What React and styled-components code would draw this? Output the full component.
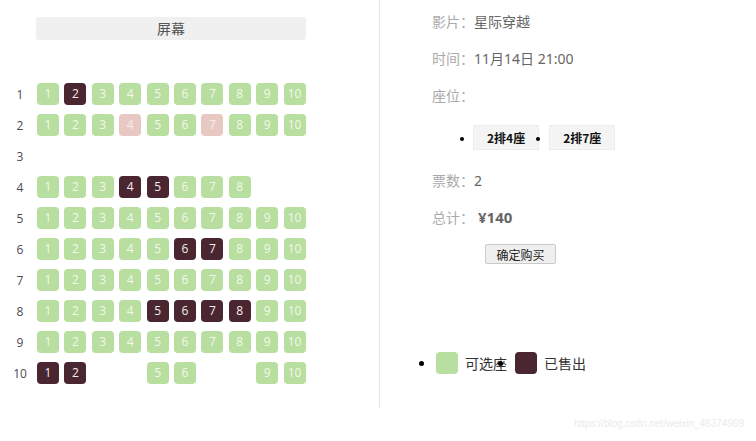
import styled, { createGlobalStyle } from "styled-components";

const GlobalStyle = createGlobalStyle`
  html, body {
    margin: 0;
    padding: 0;
    background: #fff;
  }
  body {
    font-family: "Noto Sans", "Noto Sans CJK SC", sans-serif;
  }
`;

const Page = styled.div`
  position: relative;
  display: flex;
  width: 756px;
  height: 441px;
  overflow: hidden;
`;

const Hall = styled.div`
  width: 379px;
  height: 408px;
  border-right: 1px solid #e6e6e6;
  display: flex;
  flex-direction: column;
`;

const Screen = styled.div`
  margin: 17px 0 0 36px;
  width: 270px;
  height: 23px;
  border-radius: 3px;
  background: #f0f0f0;
  color: #555;
  font-family: "Noto Sans CJK SC", sans-serif;
  font-size: 14px;
  line-height: 23px;
  text-align: center;
`;

const Rows = styled.div`
  margin-top: 43px;
  display: flex;
  flex-direction: column;
  gap: 9px;
`;

const Row = styled.div`
  display: flex;
  align-items: center;
  height: 22px;
`;

const RowNo = styled.span`
  width: 30px;
  margin: 0 2px 0 5px;
  text-align: center;
  color: #4a4a55;
  font-family: "Open Sans", sans-serif;
  font-size: 12px;
`;

const Seats = styled.div`
  display: flex;
  gap: 5.4px;
`;

const seatColors = {
  free: { bg: "#b8dea0", fg: "#f1f9ea" },
  sold: { bg: "#4a2631", fg: "#f4eef0" },
  picked: { bg: "#e8c8c3", fg: "#f8ecea" },
};

const Seat = styled.span`
  width: 22px;
  height: 22px;
  border-radius: 4px;
  background: ${(p) => seatColors[p.$state].bg};
  color: ${(p) => seatColors[p.$state].fg};
  visibility: ${(p) => (p.$gap ? "hidden" : "visible")};
  font-family: "Open Sans", sans-serif;
  font-size: 12px;
  line-height: 22px;
  text-align: center;
`;

const Order = styled.div`
  flex: 1;
  padding: 3px 0 0 52px;
  display: flex;
  flex-direction: column;
  font-family: "Noto Sans CJK SC", sans-serif;
  font-size: 14px;
`;

const Info = styled.div`
  height: 37px;
  line-height: 37px;
  color: #aaa;
`;

const Value = styled.span`
  color: #666;
  font-weight: ${(p) => (p.$bold ? 700 : 400)};
  font-size: ${(p) => (p.$bold ? "15px" : "14px")};
  margin-left: ${(p) => (p.$bold ? "4px" : "0")};
  font-family: "Noto Sans", "Noto Sans CJK SC", sans-serif;
`;

const TagList = styled.ul`
  list-style: none;
  margin: 11px 0 12px;
  padding: 0 0 0 41px;
  display: flex;
  gap: 10px;
`;

const Tag = styled.li`
  position: relative;
  height: 25px;
  padding: 0 13px;
  background: #f4f4f4;
  border: 1px solid #ececec;
  box-sizing: border-box;
  color: #111;
  font-size: 12px;
  font-weight: 700;
  line-height: 23px;

  &::before {
    content: "";
    position: absolute;
    left: -14px;
    top: 11px;
    width: 4px;
    height: 4px;
    border-radius: 50%;
    background: #000;
  }
`;

const BuyButton = styled.button`
  align-self: flex-start;
  margin: 8px 0 0 53px;
  width: 71px;
  height: 20px;
  padding: 0;
  background: #efefef;
  border: 1px solid #cacaca;
  border-radius: 2px;
  color: #222;
  font-family: "Noto Sans CJK SC", sans-serif;
  font-size: 12px;
`;

const Legend = styled.ul`
  list-style: none;
  margin: 88px 0 0 4px;
  padding: 0;
  display: flex;
  gap: 8px;
`;

const LegendItem = styled.li`
  position: relative;
  display: flex;
  align-items: center;
  gap: 7px;
  color: #333;
  font-size: 14px;

  &::before {
    content: "";
    position: absolute;
    left: -17px;
    top: 9px;
    width: 5px;
    height: 5px;
    border-radius: 50%;
    background: #000;
  }
`;

const Swatch = styled.span`
  width: 22px;
  height: 22px;
  border-radius: 4px;
  background: ${(p) => p.$color};
`;

const Watermark = styled.div`
  position: absolute;
  right: 12px;
  bottom: 12px;
  color: #ebebeb;
  font-family: "Liberation Sans", sans-serif;
  font-size: 10px;
`;

const sold = {
  1: [2],
  4: [4, 5],
  6: [6, 7],
  8: [5, 6, 7, 8],
  10: [1, 2],
};
const picked = { 2: [4, 7] };
const counts = { 3: 0, 4: 8 };
const missing = { 10: [3, 4, 7, 8] };

function seatState(row, n) {
  if ((sold[row] || []).includes(n)) return "sold";
  if ((picked[row] || []).includes(n)) return "picked";
  return "free";
}

export default function App() {
  const rows = Array.from({ length: 10 }, (_, i) => i + 1);
  return (
    <>
      <GlobalStyle />
      <Page>
        <Hall>
          <Screen>屏幕</Screen>
          <Rows>
            {rows.map((r) => {
              const count = counts[r] ?? 10;
              return (
                <Row key={r}>
                  <RowNo>{r}</RowNo>
                  <Seats>
                    {Array.from({ length: count }, (_, i) => i + 1).map((n) => (
                      <Seat
                        key={n}
                        $state={seatState(r, n)}
                        $gap={(missing[r] || []).includes(n)}
                      >
                        {n}
                      </Seat>
                    ))}
                  </Seats>
                </Row>
              );
            })}
          </Rows>
        </Hall>
        <Order>
          <Info>
            影片：<Value>星际穿越</Value>
          </Info>
          <Info>
            时间：<Value>11月14日 21:00</Value>
          </Info>
          <Info>座位：</Info>
          <TagList>
            <Tag>2排4座</Tag>
            <Tag>2排7座</Tag>
          </TagList>
          <Info>
            票数：<Value>2</Value>
          </Info>
          <Info>
            总计：<Value $bold>¥140</Value>
          </Info>
          <BuyButton>确定购买</BuyButton>
          <Legend>
            <LegendItem>
              <Swatch $color="#b8dea0" />
              可选座
            </LegendItem>
            <LegendItem>
              <Swatch $color="#4a2631" />
              已售出
            </LegendItem>
          </Legend>
        </Order>
        <Watermark>https://blog.csdn.net/weixin_46374969</Watermark>
      </Page>
    </>
  );
}
